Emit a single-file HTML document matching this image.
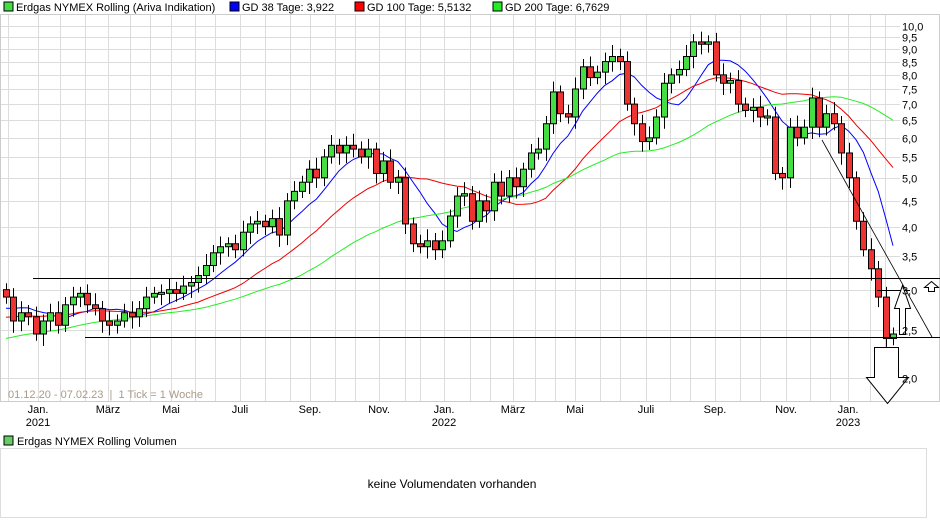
<!DOCTYPE html>
<html><head><meta charset="utf-8"><style>
body{margin:0;width:940px;height:526px;background:#fff;font-family:"Liberation Sans",sans-serif;overflow:hidden}
svg text{font-family:"Liberation Sans",sans-serif}
</style></head><body>
<svg id="s" width="940" height="526" xmlns="http://www.w3.org/2000/svg">
<g font-size="11" fill="#000">
<rect x="4" y="2" width="9" height="9" fill="#44dd44" stroke="#000"/><text x="16" y="11">Erdgas NYMEX Rolling (Ariva Indikation)</text>
<rect x="230" y="2" width="9" height="9" fill="#0000ff" stroke="#000"/><text x="242" y="11">GD 38 Tage: 3,922</text>
<rect x="355" y="2" width="9" height="9" fill="#ff0000" stroke="#000"/><text x="367" y="11">GD 100 Tage: 5,5132</text>
<rect x="493" y="2" width="9" height="9" fill="#22ee22" stroke="#000"/><text x="505" y="11">GD 200 Tage: 6,7629</text>
</g>
<g id="grid" stroke="#dcdcdc" stroke-width="1"></g>
<rect x="0.5" y="14.5" width="939" height="387" fill="none" stroke="#ccc"/>
<g id="ma"></g>
<g id="cd"></g>
<g stroke="#000" stroke-width="1" fill="none">
<line x1="33" y1="278.5" x2="940" y2="278.5"/>
<line x1="85" y1="337.5" x2="940" y2="337.5"/>
<line x1="877" y1="290.5" x2="910" y2="290.5"/>
<line x1="822" y1="140" x2="932" y2="337" stroke-width="0.8"/>
<path d="M874.5 347.5h24v30h10l-21 26l-21-26h8z" fill="#fff"/>
<path d="M899.5 334.5v-26h-5l8-23l8 23h-5v26z" fill="#fff"/>
<path d="M928.5 291.5v-4h-4l7-6l7 6h-4v4z" fill="#fff"/>
</g>
<g id="ax" font-size="11" fill="#000"></g>
<text x="8" y="398" font-size="11" fill="#aa9a88">01.12.20 - 07.02.23 &#160;|&#160; 1 Tick = 1 Woche</text>
<g font-size="11" fill="#000" text-anchor="middle">
<text x="38" y="413">Jan.</text><text x="38" y="426">2021</text>
<text x="108" y="413">März</text><text x="171" y="413">Mai</text><text x="240" y="413">Juli</text>
<text x="310" y="413">Sep.</text><text x="379" y="413">Nov.</text>
<text x="444" y="413">Jan.</text><text x="444" y="426">2022</text>
<text x="513" y="413">März</text><text x="575" y="413">Mai</text><text x="646" y="413">Juli</text>
<text x="715" y="413">Sep.</text><text x="786" y="413">Nov.</text>
<text x="848" y="413">Jan.</text><text x="848" y="426">2023</text>
</g>
<rect x="4" y="436" width="9" height="9" fill="#66cc66" stroke="#000"/>
<text x="17" y="445" font-size="11">Erdgas NYMEX Rolling Volumen</text>
<rect x="0.5" y="448.5" width="926" height="69" fill="none" stroke="#ddd"/>
<text x="452" y="488" font-size="12" text-anchor="middle">keine Volumendaten vorhanden</text>
</svg>
<script>
var NS="http://www.w3.org/2000/svg";
function Y(v){return 26+219*Math.log(10/v);}
function el(p,t,a){var e=document.createElementNS(NS,t);for(var k in a)e.setAttribute(k,a[k]);p.appendChild(e);return e;}
var g=document.getElementById('grid'),ax=document.getElementById('ax');
[38,108,171,240,310,379,444,513,575,646,715,786,848,8,60,85,130,150,195,215,265,290,335,355,405,420,470,490,535,555,600,620,670,690,740,760,810,830,870,885].forEach(function(x){el(g,'line',{x1:x+.5,y1:15,x2:x+.5,y2:401});});
var labs=["10,0",10,"9,5",9.5,"9,0",9,"8,5",8.5,"8,0",8,"7,5",7.5,"7,0",7,"6,5",6.5,"6,0",6,"5,5",5.5,"5,0",5,"4,5",4.5,"4,0",4,"3,5",3.5,"3,0",3,"2,5",2.5,"2,0",2];
for(var i=0;i<labs.length;i+=2){var y=Math.round(Y(labs[i+1]))+.5;el(g,'line',{x1:0,y1:y,x2:900,y2:y});var t=el(ax,'text',{x:902,y:y+4});t.textContent=labs[i];}
var c=[2.9,2.6,2.7,2.65, 2.45,2.6,2.7,2.55, 2.8,2.9,2.95,2.8, 2.75,2.6,2.55,2.6,2.7, 2.65,2.75,2.9,2.95, 2.95,3.0,2.95,3.05, 3.1,3.2,3.35,3.55,3.65, 3.7,3.6,3.9,4.05,4.1, 4.0,4.15,3.85,4.5,4.7, 4.9,5.2,5.0,5.5,5.8, 5.6,5.8,5.7,5.5,5.7, 5.1,5.4,4.9,5.0, 4.05,3.7,3.65,3.75,3.6, 3.75,4.2,4.6,4.65,4.1, 4.5,4.3,4.9,4.6, 5.0,4.8,5.2,5.6,5.7, 6.4,7.4,6.7,6.6, 7.5,8.3,7.9,8.1,8.5, 8.7,8.5,7.0,6.4,5.9, 6.0,6.6,7.7,8.0,8.2, 8.7,9.3,9.2,9.3, 8.0,7.7,7.8,7.0,6.8, 6.9,6.6,6.6,5.1,5.0, 6.3,6.0,6.3,7.2,6.3, 6.7,6.4,5.6,5.0,4.1, 3.6,3.3,2.9,2.4,2.45];
var n=c.length,step=(893-6)/(n-1);
var cd=document.getElementById('cd');
var prev=3.0;
for(i=0;i<n;i++){var x=Math.round(6+step*i),o=prev,cl=c[i];var hi=Math.max(o,cl)*(1+0.03+0.03*((i*7)%5)/5),lo=Math.min(o,cl)*(1-0.03-0.03*((i*3)%4)/4);
el(cd,'line',{x1:x+.5,y1:Y(hi),x2:x+.5,y2:Y(lo),stroke:'#000'});
var y1=Y(Math.max(o,cl)),y2=Y(Math.min(o,cl));if(y2-y1<2){y1-=1;y2+=1;}
el(cd,'rect',{x:x-2.5,y:y1,width:6,height:y2-y1,fill:cl>=o?'#44dd44':'#ee3333',stroke:'#000','stroke-width':1});prev=cl;}
var ext=[];for(i=0;i<40;i++)ext.push(1.9+0.95*i/39+0.1*Math.sin(i/3));var all=ext.concat(c);
function ma(p,col){var pts=[];for(i=0;i<n;i++){var s=0,k=i+40;for(var j=k-p+1;j<=k;j++)s+=all[j];var v=s/p;pts.push((6+step*i).toFixed(1)+','+Y(v).toFixed(1));}
el(document.getElementById('ma'),'polyline',{points:pts.join(' '),fill:'none',stroke:col,'stroke-width':1});}
ma(8,'#0000ff');ma(20,'#ee0000');ma(40,'#22ee22');
</script>
</body></html>
